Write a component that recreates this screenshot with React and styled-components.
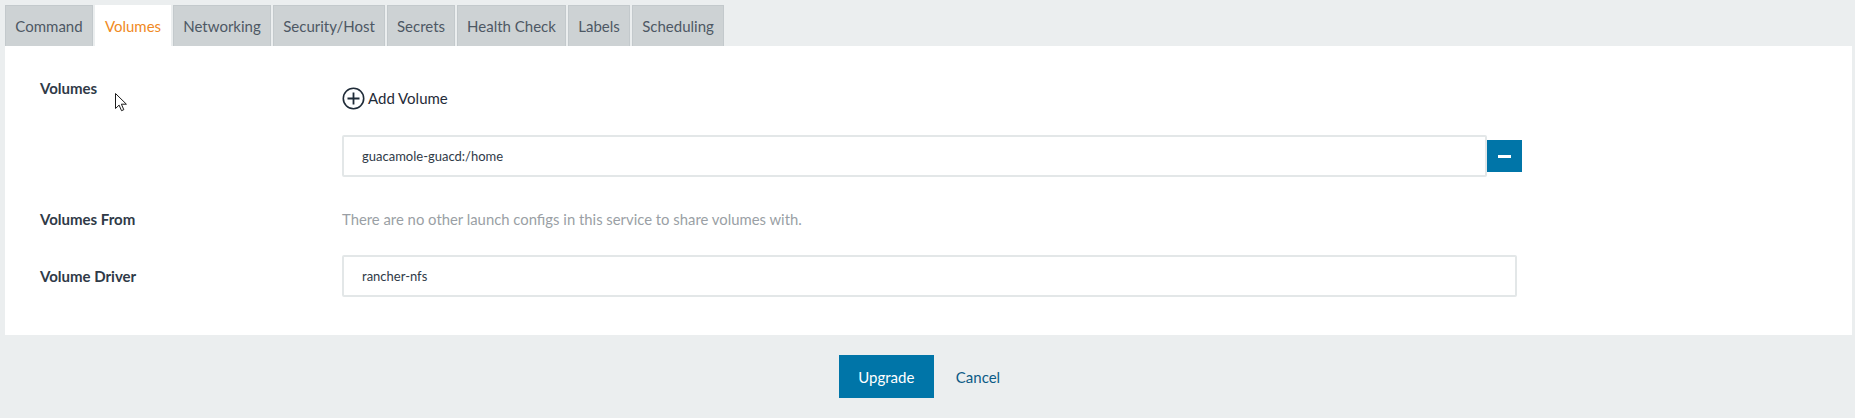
import styled, { createGlobalStyle } from 'styled-components';

const GlobalStyle = createGlobalStyle`
  html, body {
    margin: 0;
    padding: 0;
    background: #ebeeef;
    font-family: Lato, "Open Sans", sans-serif;
  }
`;

const Page = styled.div`
  width: 1855px;
  height: 418px;
  padding: 5px 3px 0 5px;
  box-sizing: border-box;
  position: relative;
`;

const TabBar = styled.div`
  display: flex;
  gap: 2px;
  height: 41px;
`;

const Tab = styled.div`
  display: flex;
  align-items: center;
  justify-content: center;
  width: ${(p) => p.$w}px;
  box-sizing: border-box;
  font-size: 15px;
  background: ${(p) => (p.$active ? '#ffffff' : '#cdd2d4')};
  color: ${(p) => (p.$active ? '#f08a24' : '#4d5864')};
  border: 1px solid ${(p) => (p.$active ? '#ffffff' : '#c3c9cc')};
  border-bottom: none;
`;

const Panel = styled.section`
  background: #ffffff;
  height: 289px;
  box-sizing: border-box;
  padding: 33px 0 0 35px;
  display: grid;
  grid-template-columns: 302px 1180px;
  grid-auto-rows: min-content;
  align-items: start;
`;

const Label = styled.div`
  font-weight: 700;
  font-size: 15px;
  color: #2f3a47;
  line-height: 18px;
  padding-top: ${(p) => p.$top || 0}px;
`;

const Field = styled.div`
  display: flex;
  flex-direction: column;
  gap: ${(p) => p.$gap || 0}px;
  padding-bottom: ${(p) => p.$bottom || 0}px;
`;

const AddLink = styled.div`
  display: flex;
  align-items: center;
  gap: 3px;
  margin-top: 8px;
  font-size: 15px;
  color: #1f2b38;
  height: 22px;
`;

const InputRow = styled.div`
  display: flex;
  align-items: center;
`;

const TextBox = styled.div`
  width: ${(p) => p.$w}px;
  height: 42px;
  box-sizing: border-box;
  border: 2px solid #e3e7e8;
  border-radius: 2px;
  display: flex;
  align-items: center;
  padding-left: 18px;
  font-size: 13px;
  color: #2f3a47;
`;

const RemoveBtn = styled.div`
  width: 35px;
  height: 32px;
  background: #0075a8;
  display: flex;
  align-items: center;
  justify-content: center;

  &::before {
    content: '';
    width: 13px;
    height: 3px;
    background: #ffffff;
  }
`;

const Muted = styled.div`
  font-size: 14.85px;
  color: #9a9fa5;
  line-height: 18px;
`;

const Footer = styled.div`
  display: flex;
  justify-content: center;
  align-items: center;
  gap: 22px;
  padding-top: 20px;
  padding-right: 18px;
`;

const PrimaryButton = styled.div`
  width: 95px;
  height: 43px;
  background: #0075a8;
  color: #ffffff;
  font-size: 15px;
  display: flex;
  align-items: center;
  justify-content: center;
`;

const LinkButton = styled.div`
  font-size: 15px;
  color: #0b5b86;
`;

const Cursor = styled.svg`
  position: absolute;
  left: 115px;
  top: 93px;
`;

const tabs = [
  ['Command', 88],
  ['Volumes', 76],
  ['Networking', 98],
  ['Security/Host', 112],
  ['Secrets', 68],
  ['Health Check', 109],
  ['Labels', 62],
  ['Scheduling', 92],
];

const PlusCircle = () => (
  <svg width="23" height="23" viewBox="0 0 23 23">
    <circle cx="11.5" cy="11.5" r="10.2" fill="none" stroke="#1f2b38" strokeWidth="1.6" />
    <path d="M11.5 5.5v12M5.5 11.5h12" stroke="#1f2b38" strokeWidth="1.8" />
  </svg>
);

export default function App() {
  return (
    <Page>
      <GlobalStyle />
      <TabBar>
        {tabs.map(([name, w]) => (
          <Tab key={name} $w={w} $active={name === 'Volumes'}>
            {name}
          </Tab>
        ))}
      </TabBar>
      <Panel>
        <Label>Volumes</Label>
        <Field $gap={26} $bottom={33}>
          <AddLink>
            <PlusCircle />
            Add Volume
          </AddLink>
          <InputRow>
            <TextBox $w={1145}>guacamole-guacd:/home</TextBox>
            <RemoveBtn />
          </InputRow>
        </Field>
        <Label>Volumes From</Label>
        <Field $bottom={27}>
          <Muted>There are no other launch configs in this service to share volumes with.</Muted>
        </Field>
        <Label $top={12}>Volume Driver</Label>
        <Field>
          <TextBox $w={1175}>rancher-nfs</TextBox>
        </Field>
      </Panel>
      <Footer>
        <PrimaryButton>Upgrade</PrimaryButton>
        <LinkButton>Cancel</LinkButton>
      </Footer>
      <Cursor width="12" height="19" viewBox="0 0 12 19">
        <path d="M0.5 0.5v15l3.6-3.4 2.4 5.6 2.3-1-2.4-5.5h5z" fill="#ffffff" stroke="#1a1a1a" strokeWidth="1" strokeLinejoin="round" />
      </Cursor>
    </Page>
  );
}
